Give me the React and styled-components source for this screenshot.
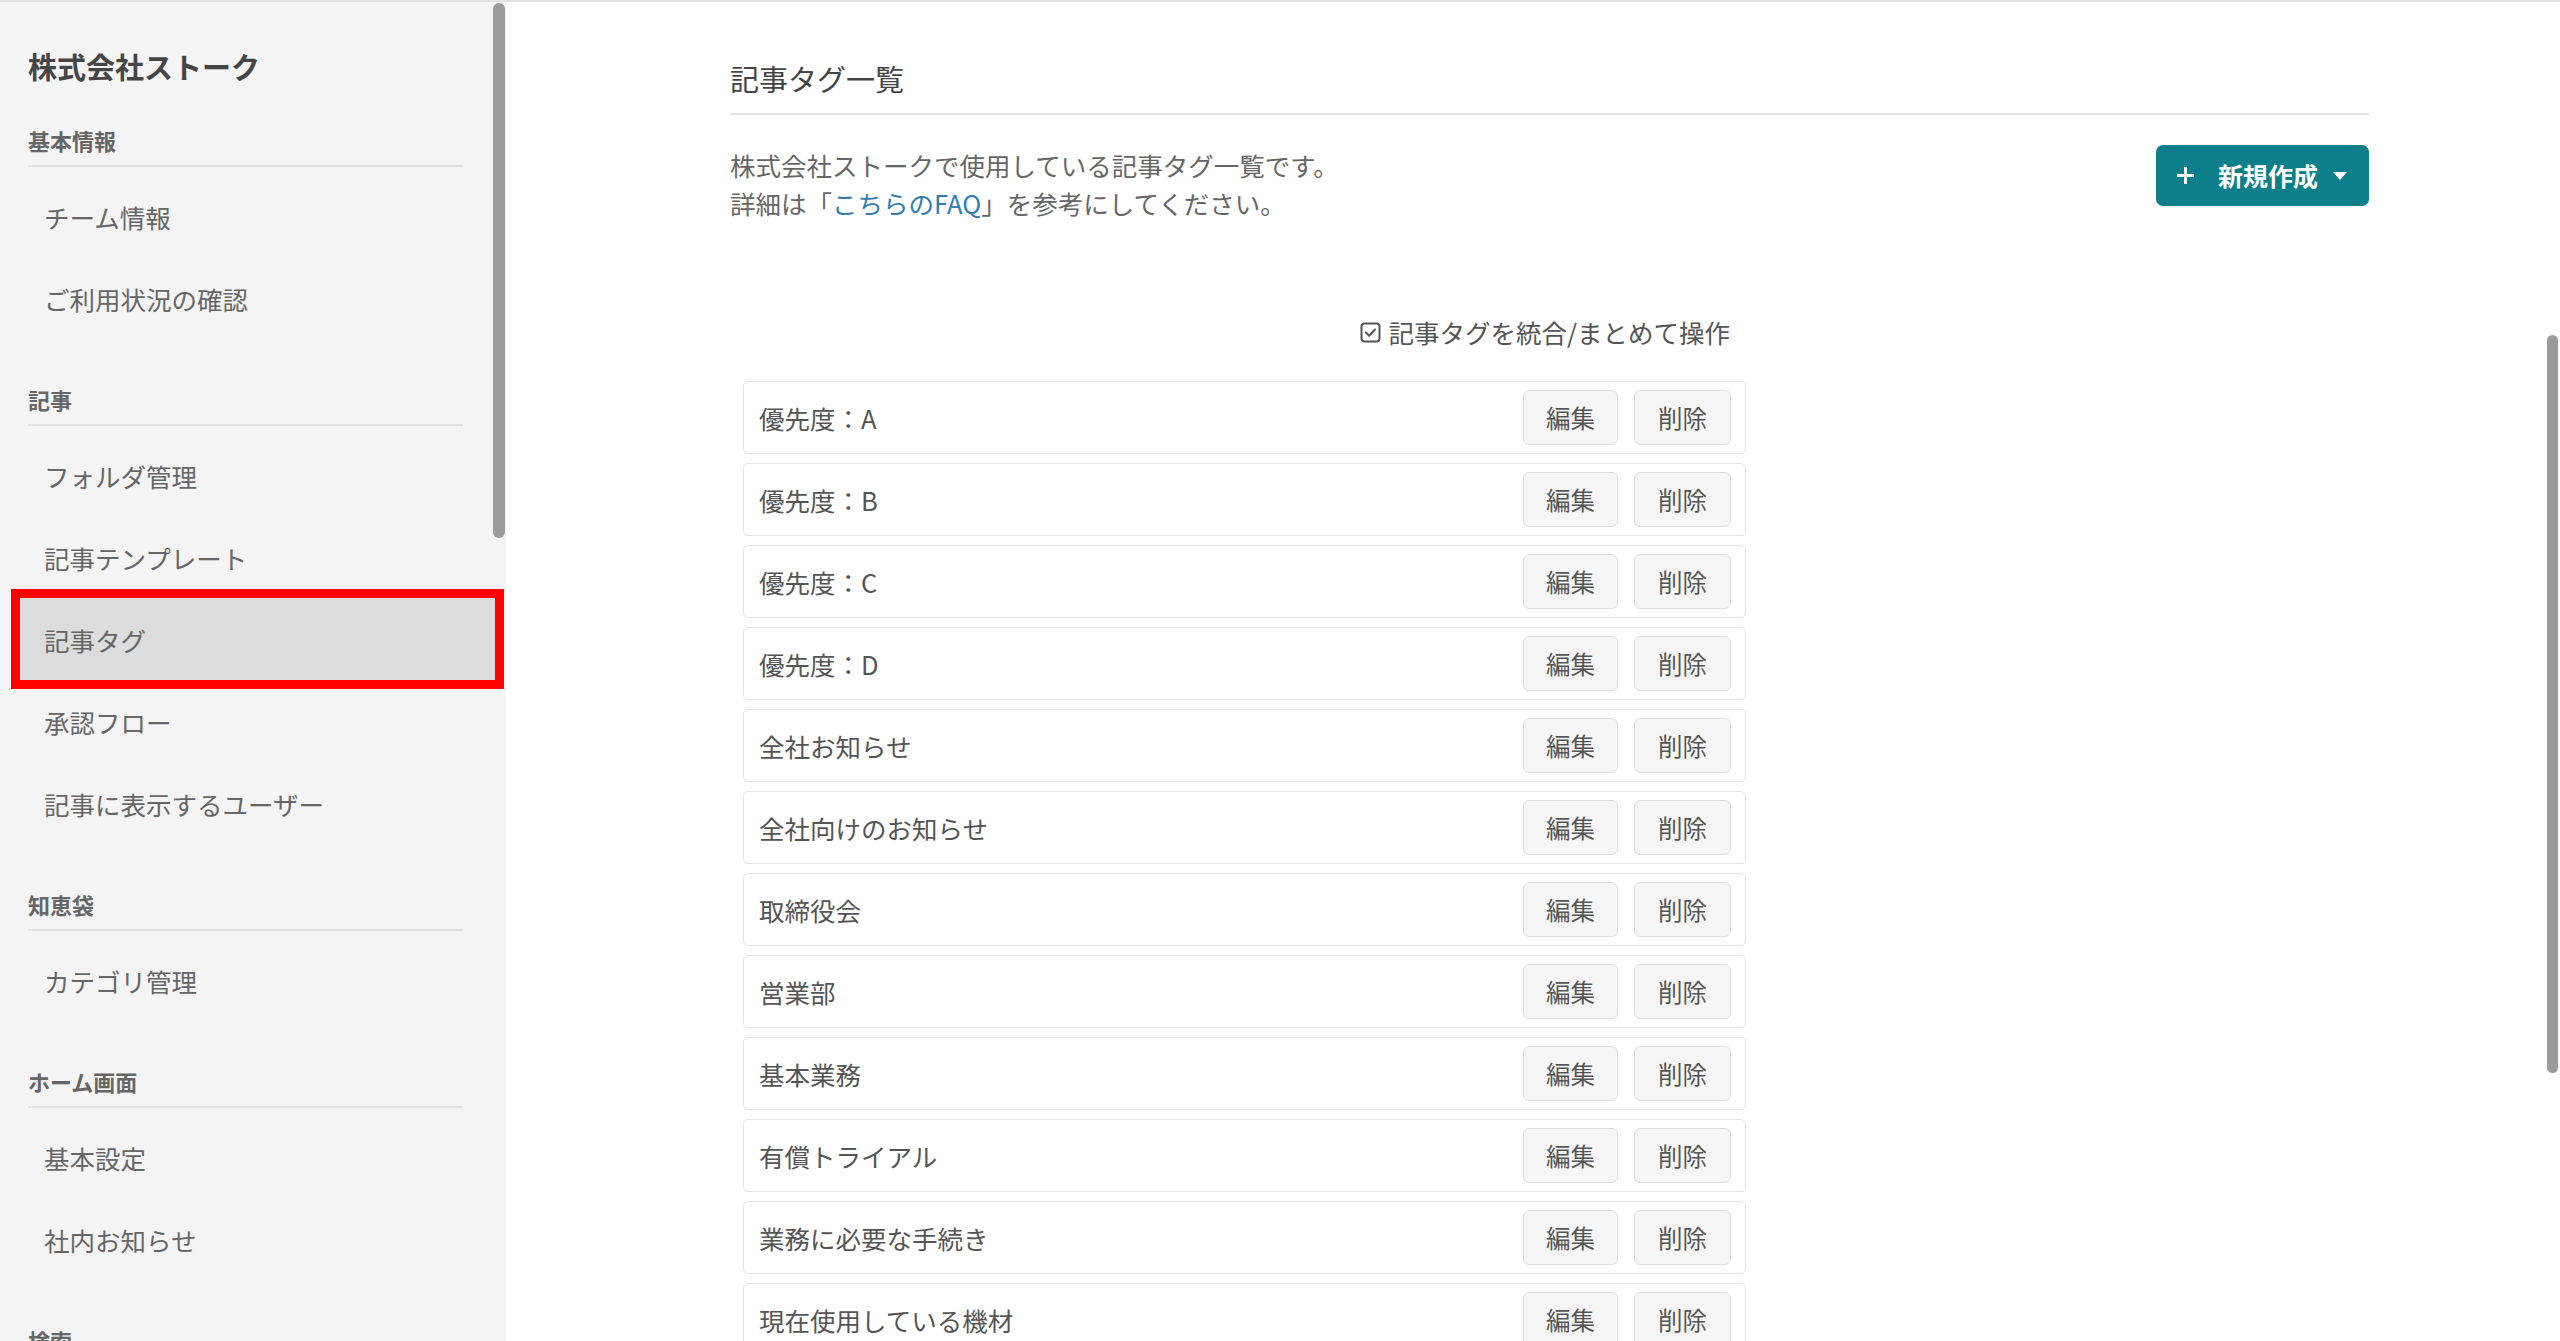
import React from "react";
import styled, { createGlobalStyle } from "styled-components";

const GlobalStyle = createGlobalStyle`
  html, body {
    margin: 0;
    padding: 0;
    height: 100%;
    overflow: hidden;
    background: #ffffff;
  }
  body {
    font-family: "Noto Sans CJK JP", "Noto Sans", sans-serif;
    -webkit-font-smoothing: antialiased;
  }
  #root { height: 100%; }
  * { box-sizing: border-box; }
`;

const Page = styled.div`
  position: relative;
  display: flex;
  height: 1341px;
  border-top: 2px solid #e2e2e2;
  overflow: hidden;
`;

const Sidebar = styled.aside`
  position: relative;
  flex: 0 0 506px;
  width: 506px;
  background: #f4f4f4;
  padding: 44px 11px 0 20px;
  overflow: hidden;
`;

const SidebarThumb = styled.div`
  position: absolute;
  top: 1px;
  right: 1px;
  width: 12px;
  height: 535px;
  border-radius: 6px;
  background: #9b9b9b;
`;

const SidebarTitle = styled.div`
  margin: 0 0 0 8px;
  font-size: 29px;
  font-weight: 700;
  line-height: 40px;
  color: #454545;
`;

const Section = styled.section`
  margin-top: ${(p) => p.$gap}px;
`;

const SectionHeader = styled.div`
  margin: 0 32px 8px 8px;
  padding-bottom: 10px;
  border-bottom: 2px solid #e2e2e2;
  font-size: 22px;
  font-weight: 700;
  line-height: 30px;
  color: #666666;
`;

const NavItem = styled.div`
  position: relative;
  display: flex;
  align-items: center;
  height: 82px;
  padding-left: 24px;
  font-size: 25.5px;
  color: #666666;
  background: ${(p) => (p.$active ? "#dcdcdc" : "transparent")};

  ${(p) =>
    p.$active &&
    `
    &::after {
      content: "";
      position: absolute;
      inset: -9px;
      border: 9px solid #ff0000;
      pointer-events: none;
    }
  `}
`;

const Main = styled.main`
  flex: 1;
  min-width: 0;
  padding: 0 191px 0 224px;
`;

const PageTitle = styled.h1`
  margin: 0;
  padding: 56px 0 15px 0;
  border-bottom: 2px solid #e6e6e6;
  font-size: 29px;
  font-weight: 400;
  line-height: 40px;
  color: #444444;
`;

const IntroRow = styled.div`
  display: flex;
  justify-content: space-between;
  align-items: flex-start;
  padding-top: 27px;
`;

const Description = styled.p`
  margin: 4px 0 0 0;
  font-size: 25.5px;
  line-height: 38px;
  color: #666666;
`;

const FaqLink = styled.a`
  color: #2f7cb6;
  text-decoration: none;
`;

const NewButton = styled.button`
  display: flex;
  align-items: center;
  width: 213px;
  height: 61px;
  margin-top: 3px;
  padding: 0 19px 0 20px;
  border: none;
  border-radius: 7px;
  background: #0d7f8b;
  color: #ffffff;
  font-family: inherit;
  font-size: 25px;
  font-weight: 700;
  cursor: pointer;
`;

const NewLabel = styled.span`
  margin-left: 23px;
  line-height: 1;
`;

const Caret = styled.span`
  margin-left: 15px;
  width: 0;
  height: 0;
  border-left: 7.5px solid transparent;
  border-right: 7.5px solid transparent;
  border-top: 8px solid #ffffff;
`;

const BulkRow = styled.div`
  display: flex;
  justify-content: flex-end;
  align-items: center;
  gap: 8px;
  width: 1003px;
  margin: 92px 0 0 13px;
  padding-right: 16px;
  font-size: 25.5px;
  line-height: 36px;
  color: #555555;
`;

const TagList = styled.div`
  display: flex;
  flex-direction: column;
  gap: 9px;
  width: 1003px;
  margin: 31px 0 0 13px;
`;

const TagRow = styled.div`
  display: flex;
  align-items: center;
  height: 73px;
  padding: 0 14px 0 15px;
  border: 1.5px solid #e3e3e3;
  border-radius: 5px;
  background: #ffffff;
`;

const TagName = styled.span`
  flex: 1;
  font-size: 25.5px;
  color: #555555;
`;

const ActionButton = styled.button`
  width: ${(p) => p.$w}px;
  height: 55px;
  margin-left: ${(p) => p.$ml}px;
  border: 1.5px solid #dedede;
  border-radius: 6px;
  background: #f5f5f5;
  font-family: inherit;
  font-size: 24.5px;
  color: #555555;
  padding: 0;
  cursor: pointer;
`;

const MainThumb = styled.div`
  position: absolute;
  top: 333px;
  right: 2px;
  width: 11px;
  height: 738px;
  border-radius: 6px;
  background: #9b9b9b;
`;

const PlusIcon = () => (
  <svg width="19" height="19" viewBox="0 0 19 19" aria-hidden="true">
    <path d="M9.5 1v17M1 9.5h17" stroke="#fff" strokeWidth="3" strokeLinecap="butt" />
  </svg>
);

const CheckIcon = () => (
  <svg width="21" height="21" viewBox="0 0 21 21" aria-hidden="true">
    <rect x="1.5" y="1.5" width="18" height="18" rx="3" fill="none" stroke="#555" strokeWidth="2" />
    <path d="M6 10.5l3.2 3.2L15 7.5" fill="none" stroke="#555" strokeWidth="2" strokeLinecap="round" strokeLinejoin="round" />
  </svg>
);

const sections = [
  { title: "基本情報", gap: 39, items: ["チーム情報", "ご利用状況の確認"] },
  {
    title: "記事",
    gap: 45,
    items: ["フォルダ管理", "記事テンプレート", "記事タグ", "承認フロー", "記事に表示するユーザー"],
  },
  { title: "知恵袋", gap: 45, items: ["カテゴリ管理"] },
  { title: "ホーム画面", gap: 45, items: ["基本設定", "社内お知らせ"] },
  { title: "検索", gap: 45, items: ["検索設定"] },
];

const tags = [
  "優先度：A",
  "優先度：B",
  "優先度：C",
  "優先度：D",
  "全社お知らせ",
  "全社向けのお知らせ",
  "取締役会",
  "営業部",
  "基本業務",
  "有償トライアル",
  "業務に必要な手続き",
  "現在使用している機材",
  "社内イベント",
];

export default function App() {
  return (
    <>
      <GlobalStyle />
      <Page>
        <Sidebar>
          <SidebarTitle>株式会社ストーク</SidebarTitle>
          {sections.map((s) => (
            <Section key={s.title} $gap={s.gap}>
              <SectionHeader>{s.title}</SectionHeader>
              {s.items.map((it) => (
                <NavItem key={it} $active={it === "記事タグ"}>
                  {it}
                </NavItem>
              ))}
            </Section>
          ))}
          <SidebarThumb />
        </Sidebar>
        <Main>
          <PageTitle>記事タグ一覧</PageTitle>
          <IntroRow>
            <Description>
              株式会社ストークで使用している記事タグ一覧です。
              <br />
              詳細は「<FaqLink href="#">こちらのFAQ</FaqLink>」を参考にしてください。
            </Description>
            <NewButton>
              <PlusIcon />
              <NewLabel>新規作成</NewLabel>
              <Caret />
            </NewButton>
          </IntroRow>
          <BulkRow>
            <CheckIcon />
            <span>記事タグを統合/まとめて操作</span>
          </BulkRow>
          <TagList>
            {tags.map((t) => (
              <TagRow key={t}>
                <TagName>{t}</TagName>
                <ActionButton $w={95} $ml={0}>編集</ActionButton>
                <ActionButton $w={97} $ml={16}>削除</ActionButton>
              </TagRow>
            ))}
          </TagList>
        </Main>
        <MainThumb />
      </Page>
    </>
  );
}
